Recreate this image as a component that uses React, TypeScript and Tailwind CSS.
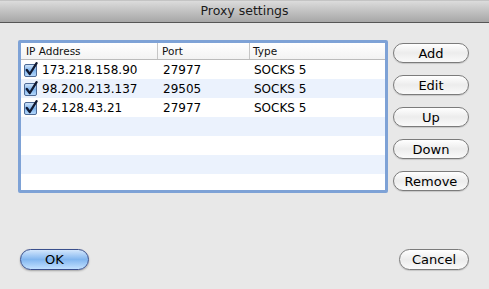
import React from "react";

type Proxy = { ip: string; port: string; type: string };

const proxies: Proxy[] = [
  { ip: "173.218.158.90", port: "27977", type: "SOCKS 5" },
  { ip: "98.200.213.137", port: "29505", type: "SOCKS 5" },
  { ip: "24.128.43.21", port: "27977", type: "SOCKS 5" },
];

function Checkbox() {
  return (
    <svg width="16" height="16" viewBox="0 0 16 16" className="shrink-0">
      <defs>
        <linearGradient id="cb" x1="0" y1="0" x2="0" y2="1">
          <stop offset="0" stopColor="#d6e8fb" />
          <stop offset="0.5" stopColor="#7eb3ec" />
          <stop offset="1" stopColor="#b9dbfd" />
        </linearGradient>
      </defs>
      <rect x="1.5" y="2.5" width="12" height="12" rx="1.5" fill="url(#cb)" stroke="#4d6a96" />
      <path d="M3.8 8 L6.8 12 L13.6 1.2" fill="none" stroke="#111a33" strokeWidth="2.3" strokeLinecap="round" strokeLinejoin="round" />
    </svg>
  );
}

function AquaButton({ label, width = "w-[76px]" }: { label: string; width?: string }) {
  return (
    <button className={`${width} h-[20px] rounded-full border border-[#7b7b7b] bg-gradient-to-b from-[#ffffff] via-[#ececec] to-[#fafafa] text-[13px] leading-none text-black shadow-[0_1px_1px_rgba(0,0,0,0.15)]`}>
      {label}
    </button>
  );
}

export default function App() {
  const rows = Array.from({ length: 7 }, (_, i) => proxies[i]);

  return (
    <div className="flex h-[289px] w-[489px] flex-col bg-[#e8e8e8] font-['DejaVu_Sans',sans-serif] text-black">
      <div className="flex h-[23px] items-center justify-center border-t border-b border-t-[#c4c4c4] border-b-[#565656] bg-gradient-to-b from-[#dcdcdc] to-[#a7a7a7] text-[12.5px] text-[#1a1a1a]">
        Proxy settings
      </div>

      <div className="flex pl-[18px] pt-[17px]">
        <div className="h-[153px] w-[370px] overflow-hidden rounded-[2px] border-[3px] border-[#7ea2d6] bg-white">
          <div className="flex h-[17px] border-b border-[#bcbcbc] bg-gradient-to-b from-white to-[#f3f3f3] text-[10.5px] leading-[16px] text-[#111]">
            <div className="w-[137px] border-r border-[#c6c6c6] pl-[5px]">IP Address</div>
            <div className="w-[92px] border-r border-[#c6c6c6] pl-[4px]">Port</div>
            <div className="flex-1 pl-[3px]">Type</div>
          </div>
          {rows.map((row, i) => (
            <div key={i} className={`flex h-[19px] items-center text-[12px] ${i % 2 === 1 ? "bg-[#ebf2fd]" : "bg-white"}`}>
              {row ? (
                <>
                  <div className="flex w-[137px] items-center gap-[3px] pl-[2px]">
                    <Checkbox />
                    <span>{row.ip}</span>
                  </div>
                  <div className="w-[92px] pl-[5px]">{row.port}</div>
                  <div className="flex-1 pl-[4px]">{row.type}</div>
                </>
              ) : null}
            </div>
          ))}
        </div>

        <div className="ml-[5px] mt-[3px] flex flex-col gap-[12px]">
          <AquaButton label="Add" />
          <AquaButton label="Edit" />
          <AquaButton label="Up" />
          <AquaButton label="Down" />
          <AquaButton label="Remove" />
        </div>
      </div>

      <div className="mt-[56px] flex justify-between pl-[20px] pr-[20px]">
        <button className="h-[21px] w-[69px] rounded-full border border-[#3a4f8c] bg-gradient-to-b from-[#d3e6fc] via-[#82b6ef] to-[#c2e1ff] text-[13px] leading-none text-black shadow-[0_1px_2px_rgba(0,0,0,0.3)]">
          OK
        </button>
        <AquaButton label="Cancel" width="w-[70px] h-[21px]" />
      </div>
    </div>
  );
}
